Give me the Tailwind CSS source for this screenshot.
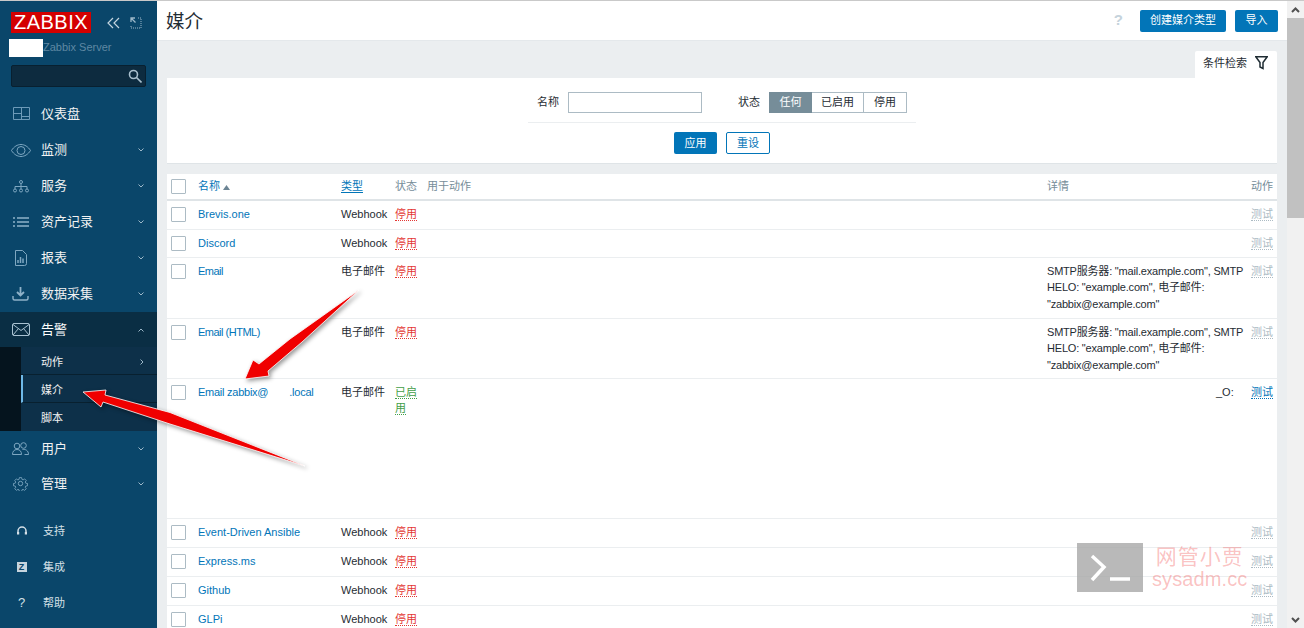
<!DOCTYPE html>
<html lang="zh-CN">
<head>
  <meta charset="UTF-8" />
  <title>媒介</title>
  <script src="https://cdn.jsdelivr.net/npm/@tailwindcss/browser@4"></script>
</head>
<body class="h-[628px] overflow-hidden bg-[#ebeef0] text-[#1f2c33] text-[11px] font-['Liberation_Sans','Noto_Sans_CJK_SC',sans-serif]">

<div class="relative flex h-[628px] overflow-hidden border-t border-[#c9c9c9]">

  <!-- sidebar -->
  <aside class="w-[157px] shrink-0 bg-[#0a466a] text-[#f2f2f2]">
    <div class="flex items-center pl-[11px] pt-[11px]">
      <div class="w-[80px] h-[21px] bg-[#d40000] text-white text-[20px] leading-[21px] text-center tracking-[0.5px]">ZABBIX</div>
      <svg class="ml-[16px]" width="14" height="12" viewBox="0 0 14 12" fill="none" stroke="#c3d4df" stroke-width="1.2"><path d="M6 1 1 6l5 5M12 1 7 6l5 5"/></svg>
      <svg class="ml-[9px]" width="12" height="12" viewBox="0 0 12 12" fill="none" stroke="#9db8c9"><path d="M1 5V1h4M1 1l4.500 4.500" stroke-width="1.300"/><path d="M8 1h3v10H1V8" stroke-dasharray="1 1"/></svg>
    </div>
    <div class="flex items-center h-[18px] mt-[6px] pl-[9px]">
      <div class="w-[34px] h-[18px] bg-white"></div>
      <span class="text-[#5f88a3] text-[11px] pb-[2px]">Zabbix Server</span>
    </div>
    <div class="relative mx-[11px] mt-[8px] h-[22px] rounded-[2px] bg-[#0d2b3f] border border-[#082030]">
      <svg class="absolute right-[3px] top-[3px]" width="14" height="14" viewBox="0 0 14 14" fill="none" stroke="#a9bfcd" stroke-width="1.600"><circle cx="5.500" cy="5.500" r="4"/><path d="m8.500 8.500 5 5"/></svg>
    </div>

    <nav class="mt-[9px] text-[13px]">
      <a class="flex items-center h-[36px]">
        <span class="w-[41px] flex justify-center pl-[1px]"><svg width="17" height="14" viewBox="0 0 17 14" fill="none" stroke="#6d9ab8"><path d="M.5.500h16v12H.5zM8.500.500v12M.5 6.500h8M8.500 9.500h8"/></svg></span>
        <span>仪表盘</span>
      </a>
      <a class="flex items-center h-[36px]">
        <span class="w-[41px] flex justify-center"><svg width="20" height="13" viewBox="0 0 20 13" fill="none" stroke="#7ea7c1"><path d="M.5 6.500C3 2.500 6.500.5 10 .5s7 2 9.500 6c-2.500 4-6 6-9.500 6s-7-2-9.500-6z"/><circle cx="10" cy="6.500" r="4"/></svg></span>
        <span class="flex-1">监测</span>
        <svg class="mr-[13px]" width="6" height="4" viewBox="0 0 6 4" fill="none" stroke="#9db8c9"><path d="m.5.500 2.500 2.500L5.500.5"/></svg>
      </a>
      <a class="flex items-center h-[36px]">
        <span class="w-[41px] flex justify-center"><svg width="16" height="13" viewBox="0 0 16 13" fill="none" stroke="#7ea7c1"><circle cx="8" cy="2" r="1.500"/><circle cx="2" cy="10.500" r="1.500"/><circle cx="8" cy="10.500" r="1.500"/><circle cx="14" cy="10.500" r="1.500"/><path d="M8 3.500V9M2 9V6.500h12V9"/></svg></span>
        <span class="flex-1">服务</span>
        <svg class="mr-[13px]" width="6" height="4" viewBox="0 0 6 4" fill="none" stroke="#9db8c9"><path d="m.5.500 2.500 2.500L5.500.5"/></svg>
      </a>
      <a class="flex items-center h-[36px]">
        <span class="w-[41px] flex justify-center"><svg width="16" height="10" viewBox="0 0 16 10" fill="none" stroke="#8fb2c9" stroke-width="1.600"><path d="M0 1h2M4 1h12M0 5h2M4 5h12M0 9h2M4 9h12"/></svg></span>
        <span class="flex-1">资产记录</span>
        <svg class="mr-[13px]" width="6" height="4" viewBox="0 0 6 4" fill="none" stroke="#9db8c9"><path d="m.5.500 2.500 2.500L5.500.5"/></svg>
      </a>
      <a class="flex items-center h-[36px]">
        <span class="w-[41px] flex justify-center"><svg width="13" height="16" viewBox="0 0 13 16" fill="none" stroke="#7ea7c1"><path d="M1.500.5h7l4 4v9a2 2 0 0 1-2 2h-9z"/><path d="M4 13V10M6.500 13V7M9 13V8.500" stroke-width="1.500"/></svg></span>
        <span class="flex-1">报表</span>
        <svg class="mr-[13px]" width="6" height="4" viewBox="0 0 6 4" fill="none" stroke="#9db8c9"><path d="m.5.500 2.500 2.500L5.500.5"/></svg>
      </a>
      <a class="flex items-center h-[36px]">
        <span class="w-[41px] flex justify-center"><svg width="17" height="14" viewBox="0 0 17 14" fill="none" stroke="#8fb2c9" stroke-width="1.400"><path d="M1 9v2.500q0 1.500 1.500 1.500h12q1.500 0 1.500-1.500V9"/><path d="M8.500 0v7M5 5l3.500 3.500L12 5" stroke-width="1.800"/></svg></span>
        <span class="flex-1">数据采集</span>
        <svg class="mr-[13px]" width="6" height="4" viewBox="0 0 6 4" fill="none" stroke="#9db8c9"><path d="m.5.500 2.500 2.500L5.500.5"/></svg>
      </a>

      <div class="bg-[#0a2e44]">
        <a class="flex items-center h-[35px]">
          <span class="w-[41px] flex justify-center"><svg width="18" height="13" viewBox="0 0 18 13" fill="none" stroke="#a9c2d2"><rect x=".5" y=".5" width="17" height="12" rx="1.500"/><path d="m1 1.500 8 6 8-6M1 12l5.500-6.500M17 12l-5.500-6.500"/></svg></span>
          <span class="flex-1 text-white">告警</span>
          <svg class="mr-[13px]" width="6" height="4" viewBox="0 0 6 4" fill="none" stroke="#9db8c9"><path d="m.5 3.500 2.500-2.500 2.500 2.500"/></svg>
        </a>
        <div class="ml-[21px] bg-[#0d3049] text-[11px] shadow-[-21px_0_0_#05141e]">
          <a class="flex items-center h-[28px] pt-[3px] pl-[20px] border-b border-[#08202f]">
            <span class="flex-1">动作</span>
            <svg class="mr-[13px]" width="4" height="6" viewBox="0 0 4 6" fill="none" stroke="#9db8c9"><path d="m.5.500 2.500 2.500L.5 5.500"/></svg>
          </a>
          <a class="flex items-center h-[28px] pt-[3px] pl-[18px] border-l-2 border-b border-l-[#6fb9e8] border-b-[#08202f]">媒介</a>
          <a class="flex items-center h-[28px] pt-[2px] pl-[20px]">脚本</a>
        </div>
      </div>

      <a class="flex items-center h-[35px]">
        <span class="w-[41px] flex justify-center"><svg width="17" height="13" viewBox="0 0 17 13" fill="none" stroke="#7ea7c1"><circle cx="5" cy="4" r="2.800"/><circle cx="11.500" cy="3.500" r="2.800"/><path d="M.5 12.500c0-3 1.500-5 4.500-5s4.500 2 4.500 5zM10.500 7.500c3-.5 6 1 6 5h-4"/></svg></span>
        <span class="flex-1">用户</span>
        <svg class="mr-[13px]" width="6" height="4" viewBox="0 0 6 4" fill="none" stroke="#9db8c9"><path d="m.5.500 2.500 2.500L5.500.5"/></svg>
      </a>
      <a class="flex items-center h-[35px]">
        <span class="w-[41px] flex justify-center"><svg width="15" height="15" viewBox="0 0 24 24" fill="none" stroke="#7ea7c1" stroke-width="1.500"><circle cx="12" cy="12" r="3.500"/><path d="M10 1.500h4l.6 3.200 2 .9 2.700-1.800 2.900 2.900-1.800 2.700.9 2 3.200.6v4l-3.200.6-.9 2 1.800 2.700-2.900 2.900-2.700-1.800-2 .9-.6 3.200h-4l-.6-3.200-2-.9-2.700 1.800-2.900-2.900 1.800-2.700-.9-2-3.200-.6v-4l3.200-.6.9-2-1.800-2.700 2.900-2.900 2.700 1.800 2-.9z" transform="translate(1.200 1.200) scale(.9)"/></svg></span>
        <span class="flex-1">管理</span>
        <svg class="mr-[13px]" width="6" height="4" viewBox="0 0 6 4" fill="none" stroke="#9db8c9"><path d="m.5.500 2.500 2.500L5.500.5"/></svg>
      </a>

      <div class="mt-[12px] text-[11px] text-[#d5e0e7]">
        <a class="flex items-center h-[36px]">
          <span class="w-[43px] flex justify-center"><svg width="10" height="11" viewBox="0 0 10 11" fill="none" stroke="#d5e0e7" stroke-width="1.500"><path d="M1 7V5a4 4 0 0 1 8 0v2"/><path d="M1 6v2.500M9 6v2.500" stroke-width="2.400"/></svg></span>
          <span>支持</span>
        </a>
        <a class="flex items-center h-[36px]">
          <span class="w-[43px] flex justify-center"><span class="w-[10px] h-[10px] bg-[#c6d4dd] text-[#0a466a] text-[9px] leading-[10px] text-center font-bold">Z</span></span>
          <span>集成</span>
        </a>
        <a class="flex items-center h-[36px]">
          <span class="w-[43px] text-center text-[13px] text-[#d5e0e7]">?</span>
          <span>帮助</span>
        </a>
      </div>
    </nav>
  </aside>

  <!-- main column -->
  <main class="w-[1130px] shrink-0">
    <header class="flex items-center h-[40px] bg-white pl-[9px] pr-[9px] border-b border-[#e4e8eb]">
      <h1 class="flex-1 pt-[3px] text-[18.500px] text-[#1f2c33]">媒介</h1>
      <span class="mr-[17px] text-[15px] font-bold text-[#c5d3dc]">?</span>
      <button class="w-[86px] h-[22px] rounded-[2px] bg-[#0275b8] text-white text-[11px]">创建媒介类型</button>
      <button class="ml-[9px] w-[43px] h-[22px] rounded-[2px] bg-[#0275b8] text-white text-[11px]">导入</button>
    </header>

    <div class="pl-[10px] pr-[10px]">
      <div class="flex justify-end pt-[10px]">
        <div class="flex items-center w-[82px] h-[27px] bg-white pl-[8px] pb-[3px] rounded-t-[2px]">
          <span class="flex-1">条件检索</span>
          <svg class="mr-[9px]" width="13" height="14" viewBox="0 0 13 14" fill="none" stroke="#1f2c33" stroke-width="1.500"><path d="M.8.800h11.400L8 6.500v6L5 11V6.500z"/></svg>
        </div>
      </div>

      <form class="h-[86px] bg-white border-b border-[#dfe4e7]">
        <div class="flex items-center justify-center h-[45px] pt-[5px] w-[388px] mx-auto border-b border-[#ebeef0]">
          <label class="mr-[9px]">名称</label>
          <input class="w-[134px] h-[21px] border border-[#acbbc4] bg-white" />
          <label class="ml-[36px] mr-[9px]">状态</label>
          <div class="flex h-[21px] border border-[#acbbc4] leading-[19px] text-center">
            <span class="w-[43px] -my-px -ml-px h-[21px] leading-[21px] bg-[#768d99] text-white">任何</span>
            <span class="w-[52px] border-r border-[#acbbc4]">已启用</span>
            <span class="w-[42px]">停用</span>
          </div>
        </div>
        <div class="flex justify-center gap-[9px] pt-[9px]">
          <button class="w-[43px] h-[22px] rounded-[2px] bg-[#0275b8] text-white text-[11px]">应用</button>
          <button class="w-[44px] h-[22px] rounded-[2px] border border-[#0275b8] bg-white text-[#0275b8] text-[11px]">重设</button>
        </div>
      </form>

      <table class="mt-[10px] w-[1110px] table-fixed bg-white">
        <colgroup>
          <col class="w-[31px]" /><col class="w-[143px]" /><col class="w-[54px]" /><col class="w-[32px]" /><col class="w-[620px]" /><col class="w-[195px]" /><col class="w-[35px]" />
        </colgroup>
        <thead>
          <tr class="h-[26px] border-b-2 border-[#dfe4e7] text-[#768d99] text-left">
            <th class="pl-[4px] font-normal"><span class="block w-[15px] h-[15px] border border-[#acbbc4] rounded-[1px]"></span></th>
            <th class="font-normal text-[#0275b8]">名称 <svg class="inline align-baseline" width="7" height="5" viewBox="0 0 7 5" fill="#6c8494"><path d="M3.500 0 7 5H0z"/></svg></th>
            <th class="font-normal text-[#0275b8]"><span class="border-b border-[#0275b8]">类型</span></th>
            <th class="font-normal">状态</th>
            <th class="font-normal whitespace-nowrap">用于动作</th>
            <th class="font-normal">详情</th>
            <th class="font-normal pr-[4px] text-right">动作</th>
          </tr>
        </thead>
        <tbody class="leading-[16.500px] align-top">
          <tr class="h-[29px] border-b border-[#ebeef0]">
            <td class="pl-[4px] pt-[6px]"><span class="block w-[15px] h-[15px] border border-[#acbbc4] rounded-[1px]"></span></td>
            <td class="pt-[5px] text-[#0275b8]">Brevis.one</td>
            <td class="pt-[5px]">Webhook</td>
            <td class="pt-[5px]"><span class="text-[#e33734] border-b border-dotted border-[#e33734]">停用</span></td>
            <td></td><td></td>
            <td class="pt-[5px] pr-[4px] text-right"><span class="text-[#acbbc4] border-b border-dotted border-[#acbbc4]">测试</span></td>
          </tr>
          <tr class="h-[28px] border-b border-[#ebeef0]">
            <td class="pl-[4px] pt-[6px]"><span class="block w-[15px] h-[15px] border border-[#acbbc4] rounded-[1px]"></span></td>
            <td class="pt-[5px] text-[#0275b8]">Discord</td>
            <td class="pt-[5px]">Webhook</td>
            <td class="pt-[5px]"><span class="text-[#e33734] border-b border-dotted border-[#e33734]">停用</span></td>
            <td></td><td></td>
            <td class="pt-[5px] pr-[4px] text-right"><span class="text-[#acbbc4] border-b border-dotted border-[#acbbc4]">测试</span></td>
          </tr>
          <tr class="h-[61px] border-b border-[#ebeef0]">
            <td class="pl-[4px] pt-[6px]"><span class="block w-[15px] h-[15px] border border-[#acbbc4] rounded-[1px]"></span></td>
            <td class="pt-[5px] text-[#0275b8] tracking-[-0.5px]">Email</td>
            <td class="pt-[5px]">电子邮件</td>
            <td class="pt-[5px]"><span class="text-[#e33734] border-b border-dotted border-[#e33734]">停用</span></td>
            <td></td>
            <td class="pt-[5px] whitespace-nowrap tracking-[-0.2px]">SMTP服务器: "mail.example.com", SMTP<br />HELO: "example.com", 电子邮件:<br />"zabbix@example.com"</td>
            <td class="pt-[5px] pr-[4px] text-right"><span class="text-[#acbbc4] border-b border-dotted border-[#acbbc4]">测试</span></td>
          </tr>
          <tr class="h-[60px] border-b border-[#ebeef0]">
            <td class="pl-[4px] pt-[6px]"><span class="block w-[15px] h-[15px] border border-[#acbbc4] rounded-[1px]"></span></td>
            <td class="pt-[5px] text-[#0275b8] tracking-[-0.5px]">Email (HTML)</td>
            <td class="pt-[5px]">电子邮件</td>
            <td class="pt-[5px]"><span class="text-[#e33734] border-b border-dotted border-[#e33734]">停用</span></td>
            <td></td>
            <td class="pt-[5px] whitespace-nowrap tracking-[-0.2px]">SMTP服务器: "mail.example.com", SMTP<br />HELO: "example.com", 电子邮件:<br />"zabbix@example.com"</td>
            <td class="pt-[5px] pr-[4px] text-right"><span class="text-[#acbbc4] border-b border-dotted border-[#acbbc4]">测试</span></td>
          </tr>
          <tr class="h-[140px] border-b border-[#ebeef0]">
            <td class="pl-[4px] pt-[6px]"><span class="block w-[15px] h-[15px] border border-[#acbbc4] rounded-[1px]"></span></td>
            <td class="pt-[5px] text-[#0275b8] whitespace-nowrap tracking-[-0.25px]">Email zabbix@<span class="ml-[21px]">.local</span></td>
            <td class="pt-[5px]">电子邮件</td>
            <td class="pt-[5px] whitespace-nowrap"><span class="text-[#429e47] border-b border-dotted border-[#429e47]">已启<br />用</span></td>
            <td></td>
            <td class="pt-[5px] pl-[169px] whitespace-nowrap">_O:</td>
            <td class="pt-[5px] pr-[4px] text-right"><span class="text-[#0275b8] border-b border-dotted border-[#0275b8]">测试</span></td>
          </tr>
          <tr class="h-[29px] border-b border-[#ebeef0]">
            <td class="pl-[4px] pt-[6px]"><span class="block w-[15px] h-[15px] border border-[#acbbc4] rounded-[1px]"></span></td>
            <td class="pt-[5px] text-[#0275b8]">Event-Driven Ansible</td>
            <td class="pt-[5px]">Webhook</td>
            <td class="pt-[5px]"><span class="text-[#e33734] border-b border-dotted border-[#e33734]">停用</span></td>
            <td></td><td></td>
            <td class="pt-[5px] pr-[4px] text-right"><span class="text-[#acbbc4] border-b border-dotted border-[#acbbc4]">测试</span></td>
          </tr>
          <tr class="h-[29px] border-b border-[#ebeef0]">
            <td class="pl-[4px] pt-[6px]"><span class="block w-[15px] h-[15px] border border-[#acbbc4] rounded-[1px]"></span></td>
            <td class="pt-[5px] text-[#0275b8]">Express.ms</td>
            <td class="pt-[5px]">Webhook</td>
            <td class="pt-[5px]"><span class="text-[#e33734] border-b border-dotted border-[#e33734]">停用</span></td>
            <td></td><td></td>
            <td class="pt-[5px] pr-[4px] text-right"><span class="text-[#acbbc4] border-b border-dotted border-[#acbbc4]">测试</span></td>
          </tr>
          <tr class="h-[29px] border-b border-[#ebeef0]">
            <td class="pl-[4px] pt-[6px]"><span class="block w-[15px] h-[15px] border border-[#acbbc4] rounded-[1px]"></span></td>
            <td class="pt-[5px] text-[#0275b8]">Github</td>
            <td class="pt-[5px]">Webhook</td>
            <td class="pt-[5px]"><span class="text-[#e33734] border-b border-dotted border-[#e33734]">停用</span></td>
            <td></td><td></td>
            <td class="pt-[5px] pr-[4px] text-right"><span class="text-[#acbbc4] border-b border-dotted border-[#acbbc4]">测试</span></td>
          </tr>
          <tr class="h-[29px] border-b border-[#ebeef0]">
            <td class="pl-[4px] pt-[6px]"><span class="block w-[15px] h-[15px] border border-[#acbbc4] rounded-[1px]"></span></td>
            <td class="pt-[5px] text-[#0275b8]">GLPi</td>
            <td class="pt-[5px]">Webhook</td>
            <td class="pt-[5px]"><span class="text-[#e33734] border-b border-dotted border-[#e33734]">停用</span></td>
            <td></td><td></td>
            <td class="pt-[5px] pr-[4px] text-right"><span class="text-[#acbbc4] border-b border-dotted border-[#acbbc4]">测试</span></td>
          </tr>
        </tbody>
      </table>
    </div>
  </main>

  <!-- scrollbar -->
  <div class="flex-1 flex flex-col items-center bg-[#f1f1f1]">
    <div class="h-[17px] flex items-center"><svg width="9" height="6" viewBox="0 0 9 6" fill="none" stroke="#505050" stroke-width="2"><path d="m1 5 3.500-3.500L8 5"/></svg></div>
    <div class="w-full h-[200px] bg-[#c1c1c1]"></div>
    <div class="mt-auto h-[17px] flex items-center"><svg width="9" height="6" viewBox="0 0 9 6" fill="none" stroke="#505050" stroke-width="2"><path d="m1 1 3.500 3.500L8 1"/></svg></div>
  </div>

  <!-- annotation arrows drawn over the screenshot -->
  <svg class="absolute left-0 top-[-1px] pointer-events-none drop-shadow-[2px_2px_2px_rgba(0,0,0,0.4)]" width="400" height="500" viewBox="0 0 400 500">
    <path d="M359 290 302 342 268 371 269 376 245 379 253 360 259 364 290 339Z" fill="#f00000" stroke="#fff" stroke-width=".8"/>
    <path d="M305 466 170 412.500 105 395 106 390 83 392 101 407 103 402 170 424Z" fill="#f00000" stroke="#fff" stroke-width=".8"/>
  </svg>

  <!-- watermark -->
  <div class="absolute left-[1077px] top-[542px] flex items-start pointer-events-none">
    <div class="w-[66px] h-[49px] bg-[#a8a8a8]/80 flex items-center justify-center">
      <svg width="40" height="28" viewBox="0 0 40 28" fill="none" stroke="#fff" stroke-width="3.500"><path d="m2 2 12 11L2 26"/><path d="M20 25h20"/></svg>
    </div>
    <div class="ml-[9px] text-[#f03030]/30 text-center">
      <div class="text-[21px] leading-[24px] tracking-[1px] font-['Noto_Sans_CJK_SC',sans-serif]">网管小贾</div>
      <div class="text-[20px] leading-[24px] tracking-[0.1px]">sysadm.cc</div>
    </div>
  </div>
</div>

</body>
</html>
